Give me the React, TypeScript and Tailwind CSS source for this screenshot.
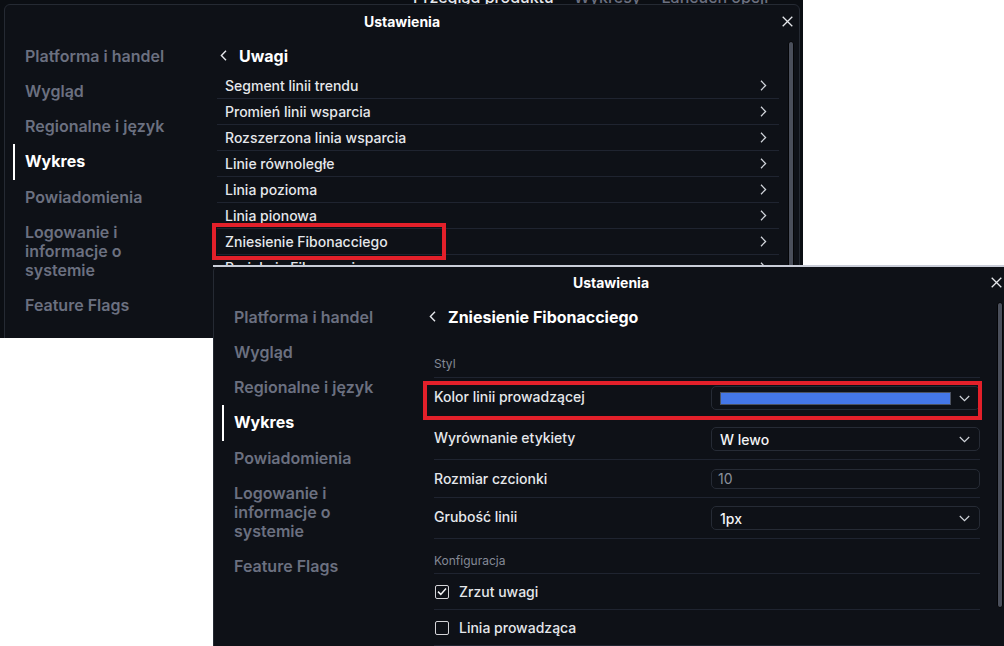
import React from "react";

const SIDEBAR = [
  "Platforma i handel",
  "Wygląd",
  "Regionalne i język",
  "Wykres",
  "Powiadomienia",
  "Logowanie i informacje o systemie",
  "Feature Flags",
];

const UWAGI = [
  "Segment linii trendu",
  "Promień linii wsparcia",
  "Rozszerzona linia wsparcia",
  "Linie równoległe",
  "Linia pozioma",
  "Linia pionowa",
  "Zniesienie Fibonacciego",
  "Projekcja Fibonacciego",
  "Kanał Fibonacciego",
];

function CloseIcon() {
  return (
    <svg width="11" height="11" viewBox="0 0 11 11" className="absolute right-[6px] top-[11px]">
      <path d="M0.7 0.7 L10.3 10.3 M10.3 0.7 L0.7 10.3" stroke="#e5e7eb" strokeWidth="1.3" fill="none" />
    </svg>
  );
}

function ChevronLeft() {
  return (
    <svg width="7" height="11" viewBox="0 0 7 11" className="shrink-0">
      <path d="M6 0.8 L1.4 5.5 L6 10.2" stroke="#e5e7eb" strokeWidth="1.4" fill="none" />
    </svg>
  );
}

function ChevronRight() {
  return (
    <svg width="7" height="11" viewBox="0 0 7 11" className="shrink-0">
      <path d="M1 0.8 L5.6 5.5 L1 10.2" stroke="#d1d5db" strokeWidth="1.3" fill="none" />
    </svg>
  );
}

function ChevronDown() {
  return (
    <svg width="11" height="7" viewBox="0 0 11 7" className="shrink-0">
      <path d="M0.8 1 L5.5 5.6 L10.2 1" stroke="#d1d5db" strokeWidth="1.2" fill="none" />
    </svg>
  );
}

function Sidebar() {
  return (
    <div className="w-[212px] shrink-0 flex flex-col pt-[0.5px]">
      {SIDEBAR.map((s) => {
        const active = s === "Wykres";
        return (
          <div
            key={s}
            className={
              active
                ? "ml-[8px] pl-[10px] border-l-2 border-white py-[8.1px] text-[16px] leading-[19.1px] w-[170px] font-bold text-white"
                : "ml-[8px] pl-[10px] border-l-2 border-transparent py-[8.1px] text-[16px] leading-[19.1px] w-[170px] font-semibold text-[#6b7080]"
            }
          >
            {s}
          </div>
        );
      })}
    </div>
  );
}

function Dialog({ children, thumbH, h }: { children: React.ReactNode; thumbH: string; h: string }) {
  return (
    <div className={`w-[796px] ${h} shrink-0 rounded-[6px] border border-[#252a33] bg-[#0e1117] flex flex-col relative`}>
      <div className="h-[33px] shrink-0 flex items-center justify-center relative">
        <span className="text-[14px] font-bold text-white">Ustawienia</span>
        <CloseIcon />
      </div>
      <div className="flex flex-1">
        <Sidebar />
        <div className="w-[562px] shrink-0 flex flex-col">{children}</div>
      </div>
      <div className={`absolute right-[5px] top-[36px] w-[6px] ${thumbH} rounded-full bg-[#4a4f5b] border border-[#050608]`} />
    </div>
  );
}

function Header({ title }: { title: string }) {
  return (
    <div className="h-[35px] shrink-0 flex items-center pl-[3px]">
      <ChevronLeft />
      <span className="ml-[12px] text-[16px] font-bold text-white">{title}</span>
    </div>
  );
}

function Select({ children }: { children: React.ReactNode }) {
  return (
    <div className="h-[24px] rounded-[5px] border border-[#262b35] flex items-center justify-between pl-[8px] pr-[9px]">
      {children}
      <ChevronDown />
    </div>
  );
}

function Row({ label, children, raise = true }: { label: string; children: React.ReactNode; raise?: boolean }) {
  return (
    <div className="grid grid-cols-2 gap-2 items-center py-2 border-b border-[#1f2430]">
      <span className={raise ? "-mt-[4px] text-[14px] font-medium text-[#e5e7eb]" : "text-[14px] font-medium text-[#e5e7eb]"}>
        {label}
      </span>
      {children}
    </div>
  );
}

function CheckRow({ label, checked }: { label: string; checked: boolean }) {
  return (
    <div className="h-[36px] flex items-center border-b border-[#1f2430] gap-[10px] pl-px">
      <div className="w-[14px] h-[14px] rounded-[2px] border-[1.5px] border-[#d4d4d8] flex items-center justify-center">
        {checked && (
          <svg width="10" height="9" viewBox="0 0 10 9">
            <path d="M1 4.6 L3.8 7.4 L9 1.4" stroke="#f3f4f6" strokeWidth="1.5" fill="none" />
          </svg>
        )}
      </div>
      <span className="text-[14px] font-medium text-[#e5e7eb]">{label}</span>
    </div>
  );
}

export default function App() {
  return (
    <div className="relative w-[1004px] h-[646px] bg-white overflow-hidden font-['Inter',sans-serif]">
      {/* Window 1 */}
      <div className="absolute left-0 top-0 w-[803px] h-[338px] overflow-hidden bg-[#0b0e13] pl-[4px] pt-[4px]">
        <div className="absolute left-[413px] top-[-15px] flex gap-[20px] text-[16px] font-medium">
          <span className="text-[#e5e7eb]">Przegląd produktu</span>
          <span className="text-[#6b7080]">Wykresy</span>
          <span className="text-[#6b7080]">Łańcuch opcji</span>
        </div>
        <div className="relative">
          <Dialog thumbH="h-[400px]" h="h-[420px]">
            <Header title="Uwagi" />
            {UWAGI.map((u) => (
              <div
                key={u}
                className="h-[26px] shrink-0 border-b border-[#1f2430] flex items-center justify-between pl-2 pr-3 text-[14px] font-medium text-[#e5e7eb]"
              >
                <span>{u}</span>
                <ChevronRight />
              </div>
            ))}
          </Dialog>
        </div>
      </div>

      {/* Window 2 */}
      <div className="absolute left-[213px] top-[265px] w-[791px] h-[381px] overflow-hidden bg-[#0b0e13]">
        <Dialog thumbH="h-[306px]" h="h-[420px]">
          <Header title="Zniesienie Fibonacciego" />
          <div className="px-2 flex flex-col">
            <div className="h-[44px] flex items-end pb-[5px] border-b border-[#1f2430] text-[12px] leading-[16px] text-[#848996]">
              Styl
            </div>
            <Row label="Kolor linii prowadzącej">
              <Select>
                <div className="w-[231px] h-[13px] bg-[#4477e8] border border-[#4b5262]" />
              </Select>
            </Row>
            <Row label="Wyrównanie etykiety">
              <Select>
                <span className="text-[14px] font-medium text-[#f3f4f6]">W lewo</span>
              </Select>
            </Row>
            <Row label="Rozmiar czcionki" raise={false}>
              <div className="h-[20px] rounded-[5px] border border-[#262b35] flex items-center pl-[6px] text-[14px] text-[#8b909c]">
                10
              </div>
            </Row>
            <Row label="Grubość linii">
              <Select>
                <span className="text-[14px] font-medium text-[#f3f4f6]">1px</span>
              </Select>
            </Row>
            <div className="h-[35px] flex items-end pb-[4px] border-b border-[#1f2430] text-[12px] leading-[16px] text-[#848996]">
              Konfiguracja
            </div>
            <CheckRow label="Zrzut uwagi" checked />
            <CheckRow label="Linia prowadząca" checked={false} />
          </div>
        </Dialog>
        <div className="absolute left-0 top-0 w-full h-[2px] bg-[#c9cdd8]" />
      </div>

      {/* Red annotation boxes */}
      <div className="absolute left-[212px] top-[223px] w-[234px] h-[37px] border-4 border-[#e3202a]" />
      <div className="absolute left-[423px] top-[381px] w-[559px] h-[39px] border-4 border-[#e3202a]" />
    </div>
  );
}
